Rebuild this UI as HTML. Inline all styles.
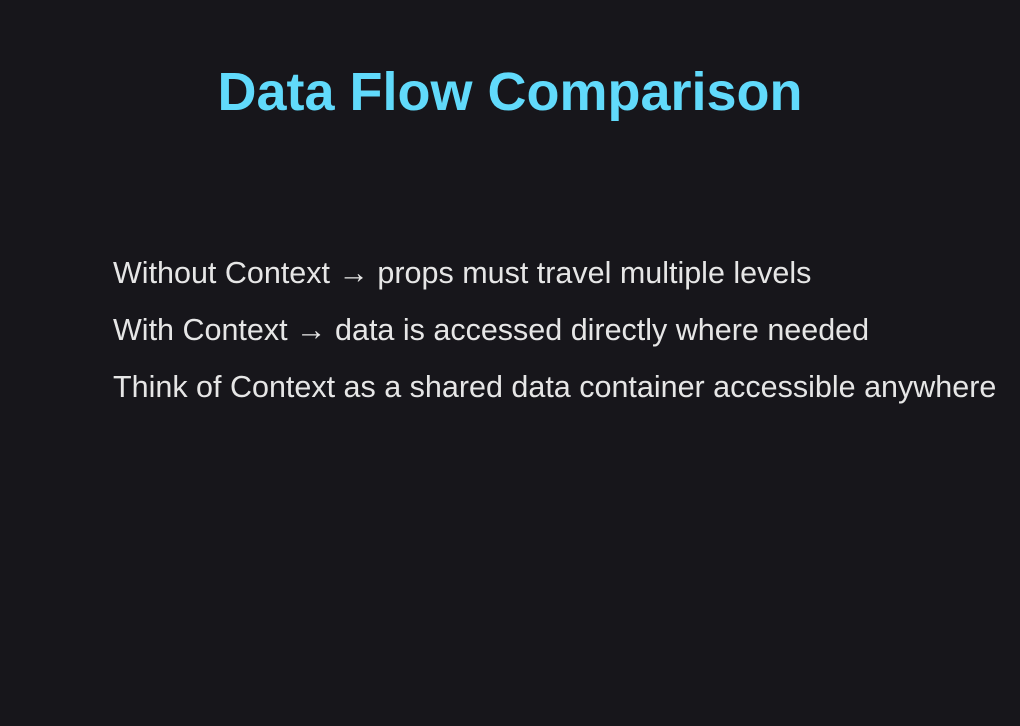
<!DOCTYPE html>
<html><head><meta charset="utf-8"><style>
html,body{margin:0;padding:0;}
body{width:1020px;height:726px;background:#17161b;position:relative;overflow:hidden;font-family:"Liberation Sans",sans-serif;}
h1{position:absolute;left:0;width:1020px;top:60px;margin:0;text-align:center;font-size:54px;font-weight:bold;color:#61dafb;line-height:64px;padding-left:0px;box-sizing:border-box;}
.l{position:absolute;left:113px;color:#e6e6e6;font-size:30.5px;line-height:36px;white-space:nowrap;}
</style></head><body>
<h1>Data Flow Comparison</h1>
<div class="l" style="top:255px">Without Context → props must travel multiple levels</div>
<div class="l" style="top:312px">With Context → data is accessed directly where needed</div>
<div class="l" style="top:369px">Think of Context as a shared data container accessible anywhere</div>
</body></html>
